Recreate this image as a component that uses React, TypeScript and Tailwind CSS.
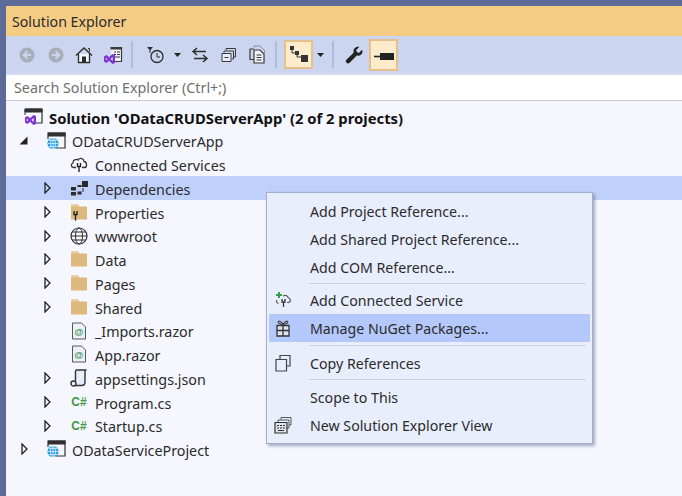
import type { ReactNode } from 'react';

const font = "font-['Noto_Sans',sans-serif]";

function Svg({ w = 18, h = 18, vb = '0 0 18 18', children }: { w?: number; h?: number; vb?: string; children: ReactNode }) {
  return (
    <svg width={w} height={h} viewBox={vb} fill="none" className="shrink-0">
      {children}
    </svg>
  );
}

function NavCircle({ dir }: { dir: 'l' | 'r' }) {
  return (
    <Svg w={16} h={16} vb="0 0 17 17">
      <circle cx="8.5" cy="8.5" r="8" fill="#a9adb8" />
      {dir === 'l' ? (
        <path d="M9 4.5 5 8.5l4 4M5.5 8.5H13" stroke="#ccd5f0" strokeWidth="2" />
      ) : (
        <path d="M8 4.5l4 4-4 4M11.5 8.5H4" stroke="#ccd5f0" strokeWidth="2" />
      )}
    </Svg>
  );
}

function HomeIcon() {
  return (
    <Svg>
      <path d="M1 9.5 9 2l8 7.5" stroke="#2d2d2d" strokeWidth="1.4" />
      <path d="M3.5 8v8.5h11V8" stroke="#2d2d2d" strokeWidth="1.3" fill="#f5f6fc" />
      <path d="M7 10.5h4v6H7z" fill="#2d2d2d" />
      <path d="M13 2.5h1.5v3" stroke="#2d2d2d" />
    </Svg>
  );
}

function VsGlyph({ x = 0, y = 0, s = 1, color = '#7b3fc4' }: { x?: number; y?: number; s?: number; color?: string }) {
  return (
    <g transform={`translate(${x} ${y}) scale(${s})`}>
      <path d="M0 2.5 2.5 1 5 3.2 8.5 0 11 1v8l-2.5 1L5 6.8 2.5 9 0 7.5zM1.8 3.6v2.8L3.4 5zM8.6 3 6.4 5l2.2 2z" fill={color} />
    </g>
  );
}

function SyncDocIcon() {
  return (
    <Svg w={20} h={20} vb="0 0 20 20">
      <path d="M7.5 2.5h11v14h-9" stroke="#3a3a3a" strokeWidth="1.2" fill="#f1f3fb" />
      <path d="M7.5 2.5h11v2h-11z" fill="#3a3a3a" />
      <path d="M11 7h2M14 7h3M11 9.5h2M14 9.5h3M11 12h6" stroke="#3a3a3a" />
      <VsGlyph x={1} y={9} color="#7d33d6" />
    </Svg>
  );
}

function HistoryIcon() {
  return (
    <Svg w={20} h={20} vb="0 0 20 20">
      <path d="M1 2h6L4 5.5z" fill="#2d2d2d" />
      <path d="M4 5v3" stroke="#2d2d2d" />
      <circle cx="11" cy="11.5" r="6" stroke="#2d2d2d" strokeWidth="1.3" />
      <path d="M11 8v4h3" stroke="#2d2d2d" />
    </Svg>
  );
}

function Caret() {
  return (
    <svg width="7" height="4" viewBox="0 0 7 4" className="shrink-0">
      <path d="M0 0h7L3.5 4z" fill="#222" />
    </svg>
  );
}

function SyncIcon() {
  return (
    <Svg>
      <path d="M6 2 2 5.5 6 9M2.5 5.5H15M12 9l4 3.5L12 16M15.5 12.5H3" stroke="#2d2d2d" strokeWidth="1.5" />
    </Svg>
  );
}

function CollapseIcon() {
  return (
    <Svg w={16} h={16} vb="0 0 16 16">
      <path d="M5 3V1.5h9.5V10H13" stroke="#3a3a3a" />
      <path d="M3 5.5V4h9.5v8H11" stroke="#3a3a3a" />
      <path d="M1 6.5h9v8H1z" stroke="#3a3a3a" fill="#e8ecf8" />
      <path d="M3.5 10.5h4" stroke="#3a3a3a" />
    </Svg>
  );
}

function PagesIcon() {
  return (
    <Svg w={19} h={19} vb="0 0 19 19">
      <path d="M6 4H2v10.5h4" stroke="#3a3a3a" strokeWidth="1.2" />
      <path d="M6 2.5V1h6l4.5 4.5V8" stroke="#8a8d96" strokeWidth="1" />
      <path d="M6 5h6l4 4v9H6z" stroke="#3a3a3a" strokeWidth="1.2" fill="#f1f3fb" />
      <path d="M8.5 10h5M8.5 12.5h5M8.5 15h5" stroke="#3a3a3a" />
    </Svg>
  );
}

function HierarchyIcon() {
  return (
    <Svg w={20} h={20} vb="0 0 20 20">
      <path d="M3 3v5h5v4h5" stroke="#333" />
      <rect x="1" y="1" width="4" height="4" fill="#333" />
      <rect x="6" y="6" width="4" height="4" fill="#333" />
      <rect x="12" y="10" width="7" height="7" fill="#333" />
    </Svg>
  );
}

function WrenchIcon() {
  return (
    <Svg>
      <path d="M17 3.8 13.6 7.2 10.8 4.4 14.2 1C11 .2 7.8 2.8 8.6 6.8L1.4 13.8c-1 1-.7 2.2.2 3s2 .9 3-.1l7.2-7.2c3.8.9 6.9-2.3 5.2-5.700z" fill="#222" />
    </Svg>
  );
}

function PinIcon() {
  return (
    <Svg w={20} h={12} vb="0 0 20 12">
      <path d="M0 7.5h7" stroke="#222" strokeWidth="1.6" />
      <path d="M6 4h14v7H6z" fill="#222" />
    </Svg>
  );
}

function ProjectIcon() {
  return (
    <Svg w={19} h={18} vb="0 0 19 18">
      <path d="M1 1h17v15H9" stroke="#303030" strokeWidth="1.2" fill="#f4f6fe" />
      <path d="M1 1h17v3H1zM1 1v6" stroke="#303030" strokeWidth="1.2" fill="#303030" />
      <circle cx="6" cy="11.5" r="5.5" fill="#2a9fe0" />
      <path d="M1 11.5h10M6 6v11M2 8.5h8M2 14.5h8" stroke="#d5effb" strokeWidth=".8" />
      <ellipse cx="6" cy="11.5" rx="2.5" ry="5.5" stroke="#d5effb" strokeWidth=".8" />
    </Svg>
  );
}

function SolutionIcon() {
  return (
    <Svg w={19} h={18} vb="0 0 19 18">
      <path d="M1 1h17v14H10" stroke="#303030" strokeWidth="1.2" />
      <path d="M1 1h17v3H1zM1 1v6" stroke="#303030" fill="#303030" />
      <VsGlyph x={1} y={7} color="#7d33d6" />
    </Svg>
  );
}

function CloudIcon() {
  return (
    <Svg>
      <path d="M6 12.5H3.5C1 12.5.5 9 3 8c-.3-3 3-4.5 5-3 2-2.800 6-1.500 6 1.500 3 .2 3.5 5.700.5 6H12" stroke="#333" strokeWidth="1.3" />
      <path d="M7.5 8v3.5h3V8M9 11.5V17" stroke="#222" strokeWidth="1.4" />
    </Svg>
  );
}

function DepsIcon() {
  return (
    <Svg>
      <rect x="1" y="8" width="5" height="3.5" fill="#2a2a2a" />
      <rect x="1" y="13" width="5" height="3.5" fill="#2a2a2a" />
      <rect x="7.5" y="6" width="4" height="2" fill="#2a2a2a" />
      <rect x="7.5" y="12.5" width="4" height="3" fill="#2a2a2a" />
      <rect x="12" y="2" width="6" height="6" fill="#2a2a2a" />
      <path d="M13 9v4" stroke="#2a2a2a" />
    </Svg>
  );
}

function FolderIcon({ children }: { children?: ReactNode }) {
  return (
    <Svg>
      <path d="M1 1.5h7l1.2 2H17v13H1z" fill="#deb97d" />
      <path d="M1 1.5h7l1 2H1z" fill="#e9cc9b" />
      {children}
    </Svg>
  );
}

function WrenchFolder() {
  return (
    <FolderIcon>
      <path d="M4 8v3.5h3V8M5.5 11v6.500" stroke="#222" strokeWidth="1.4" />
    </FolderIcon>
  );
}

function GlobeIcon() {
  return (
    <Svg>
      <circle cx="9" cy="9" r="8" stroke="#333" strokeWidth="1.2" />
      <ellipse cx="9" cy="9" rx="3.5" ry="8" stroke="#333" />
      <path d="M1 9h16M2.2 5h13.6M2.2 13h13.6" stroke="#333" />
    </Svg>
  );
}

function RazorIcon() {
  return (
    <Svg>
      <path d="M2.5 1h9l4 4v12h-13z" fill="#eef0f6" stroke="#55585f" />
      <text x="4.3" y="13" fontSize="9.5" fontWeight="700" fill="#3f9a6b" fontFamily="'Liberation Sans',sans-serif">@</text>
    </Svg>
  );
}

function JsonIcon() {
  return (
    <Svg>
      <path d="M5.5 12V2.500c0-1 .7-1.500 1.500-1.500h9.500M16.500 1c-1 0-1.500.6-1.500 1.500V13c0 2.500-2 3.500-3.500 3.500H5" stroke="#333" strokeWidth="1.4" fill="#e6ebfb" />
      <circle cx="3.5" cy="14.5" r="2.5" stroke="#333" strokeWidth="1.4" fill="#f5f6fe" />
    </Svg>
  );
}

function CsIcon() {
  return <span className="w-[18px] text-center font-['Liberation_Sans',sans-serif] text-[12px] font-bold leading-none text-[#3e9a45]">C#</span>;
}

function Arrow({ kind }: { kind?: 'open' | 'closed' }) {
  if (kind === 'open')
    return (
      <svg width="9" height="9" viewBox="0 0 9 9" className="shrink-0">
        <path d="M8.5.5v8h-8z" fill="#222" />
      </svg>
    );
  if (kind === 'closed')
    return (
      <svg width="7" height="12" viewBox="0 0 7 12" className="shrink-0">
        <path d="M1 1l5 5-5 5z" fill="none" stroke="#222" strokeWidth="1.3" />
      </svg>
    );
  return null;
}

type Row = { label: string; icon: ReactNode; indent: string; arrow?: 'open' | 'closed'; selected?: boolean; bold?: boolean };

const solutionIndent = 'ml-[-8px]';
const projectIndent = 'ml-[15px]';
const itemIndent = 'ml-[38px]';

const rows: Row[] = [
  { label: "Solution 'ODataCRUDServerApp' (2 of 2 projects)", icon: <SolutionIcon />, indent: solutionIndent, bold: true },
  { label: 'ODataCRUDServerApp', icon: <ProjectIcon />, indent: projectIndent, arrow: 'open' },
  { label: 'Connected Services', icon: <CloudIcon />, indent: itemIndent },
  { label: 'Dependencies', icon: <DepsIcon />, indent: itemIndent, arrow: 'closed', selected: true },
  { label: 'Properties', icon: <WrenchFolder />, indent: itemIndent, arrow: 'closed' },
  { label: 'wwwroot', icon: <GlobeIcon />, indent: itemIndent, arrow: 'closed' },
  { label: 'Data', icon: <FolderIcon />, indent: itemIndent, arrow: 'closed' },
  { label: 'Pages', icon: <FolderIcon />, indent: itemIndent, arrow: 'closed' },
  { label: 'Shared', icon: <FolderIcon />, indent: itemIndent, arrow: 'closed' },
  { label: '_Imports.razor', icon: <RazorIcon />, indent: itemIndent },
  { label: 'App.razor', icon: <RazorIcon />, indent: itemIndent },
  { label: 'appsettings.json', icon: <JsonIcon />, indent: itemIndent, arrow: 'closed' },
  { label: 'Program.cs', icon: <CsIcon />, indent: itemIndent, arrow: 'closed' },
  { label: 'Startup.cs', icon: <CsIcon />, indent: itemIndent, arrow: 'closed' },
  { label: 'ODataServiceProject', icon: <ProjectIcon />, indent: projectIndent, arrow: 'closed' },
];

function TreeRow({ row }: { row: Row }) {
  return (
    <div className={`flex h-[23.75px] items-center ${row.selected ? 'bg-[#bfd0fb]' : ''}`}>
      <div className={`flex w-[7px] shrink-0 justify-end ${row.indent}`}>
        <Arrow kind={row.arrow} />
      </div>
      <div className="ml-[18px] flex w-[20px] shrink-0 justify-center">{row.icon}</div>
      <span
        className={`ml-[6px] whitespace-nowrap pt-[4px] leading-none ${
          row.bold ? 'text-[14.8px] font-bold text-[#111]' : 'text-[14.3px] text-[#2b2b2b]'
        }`}
      >
        {row.label}
      </span>
    </div>
  );
}

function AddServiceIcon() {
  return (
    <Svg>
      <path d="M5 1v6M2 4h6" stroke="#2f9e44" strokeWidth="2" />
      <path d="M3 9c-1 1.5-.5 3 1.5 3.500M9 5c3-1.500 5 .5 5 1.500 2.500.5 3.500 4.500.5 5H13" stroke="#555" strokeWidth="1.2" />
      <path d="M8 8v3h3V8M9.500 11v5" stroke="#333" strokeWidth="1.3" />
    </Svg>
  );
}

function GiftIcon() {
  return (
    <Svg>
      <path d="M3 6.5h12V17H3z" fill="#dfe3ee" stroke="#333" strokeWidth="1.3" />
      <path d="M9 6.5V17M3 11.500h12" stroke="#333" strokeWidth="1.3" />
      <path d="M9 5.5C7.500 3 5.500 1.500 4.500 2.500S6 5.500 9 5.500c3 0 5.500-2 4.500-3S10.500 3 9 5.500z" stroke="#444" strokeWidth="1.2" />
    </Svg>
  );
}

function CopyIcon() {
  return (
    <Svg>
      <path d="M6 5V1.500h10V12h-3" stroke="#444" strokeWidth="1.2" />
      <path d="M2 5.500h10.500V17H2z" stroke="#444" strokeWidth="1.2" />
    </Svg>
  );
}

function NewViewIcon() {
  return (
    <Svg>
      <path d="M7 3.500V1.500h10V9h-2" stroke="#555" />
      <path d="M4 6V4h11v8h-2" stroke="#555" />
      <path d="M1 6.500h12V17H1z" fill="#dfe3ee" stroke="#333" strokeWidth="1.2" />
      <path d="M3 9.500h2M6 9.500h2M9 9.500h2M3 12h2M6 12h2M9 12h2M4 14.500h6" stroke="#333" />
    </Svg>
  );
}

function MenuItem({ label, icon, active }: { label: string; icon?: ReactNode; active?: boolean }) {
  return (
    <div className={`flex h-[28px] items-center ${active ? 'bg-[#b4c8fb]' : ''}`}>
      <div className="flex w-[28px] shrink-0 justify-center">{icon}</div>
      <span className="ml-[13px] whitespace-nowrap pt-[2px] text-[14.2px] leading-none text-[#2b2b2b]">{label}</span>
    </div>
  );
}

function MenuSep() {
  return <div className="ml-[40px] mr-[4px] h-px bg-[#cdd2dd]" />;
}

function ToolbarSep({ className }: { className: string }) {
  return <div className={`h-[27px] w-[2px] bg-[#b0bcd8] ${className}`} />;
}

export default function App() {
  return (
    <div className={`${font} flex h-[496px] w-[682px] flex-col overflow-hidden bg-[#5d6b99] pl-[6px] pt-[6px]`}>
      <div className="relative flex min-h-0 flex-1 flex-col">
        <div className="flex h-[30px] shrink-0 items-center bg-[#f5cc84] pl-[6px] pt-[2px] text-[14.2px] leading-none text-[#2a2a2a]">Solution Explorer</div>

        <div className="flex h-[37px] shrink-0 items-center bg-[#ccd5f0] pl-[13px]">
          <NavCircle dir="l" />
          <span className="ml-[13px]"><NavCircle dir="r" /></span>
          <span className="ml-[11px]"><HomeIcon /></span>
          <span className="ml-[10px]"><SyncDocIcon /></span>
          <ToolbarSep className="ml-[8px]" />
          <span className="ml-[13px]"><HistoryIcon /></span>
          <span className="ml-[8px]"><Caret /></span>
          <span className="ml-[10px]"><SyncIcon /></span>
          <span className="ml-[12px]"><CollapseIcon /></span>
          <span className="ml-[11px]"><PagesIcon /></span>
          <ToolbarSep className="ml-[8px]" />
          <div className="ml-[7px] flex h-[29px] w-[29px] items-center justify-center border-2 border-[#e5c08a] bg-[#fdeccb]">
            <HierarchyIcon />
          </div>
          <span className="ml-[4px]"><Caret /></span>
          <ToolbarSep className="ml-[8px]" />
          <span className="ml-[11px]"><WrenchIcon /></span>
          <div className="ml-[6px] flex h-[32px] w-[29px] items-center justify-center border-2 border-[#e5c08a] bg-[#fdeccb]">
            <PinIcon />
          </div>
        </div>

        <div className="h-[2px] shrink-0 bg-[#d5dcf2]" />
        <div className="flex h-[25px] shrink-0 items-center bg-white pl-[8px] pt-[1px] text-[14.3px] leading-none text-[#6f6f6f]">Search Solution Explorer (Ctrl+;)</div>
        <div className="h-[5px] shrink-0 bg-[#f5f6fe] shadow-[inset_0_1px_0_#c6cde0]" />

        <div className="min-h-0 flex-1 bg-[#f5f6fe]">
          {rows.map((row) => (
            <TreeRow key={row.label} row={row} />
          ))}
        </div>

        <div className="absolute left-[260px] top-[186px] w-[327px] border border-[#9fb0d0] bg-[#e9eefd] px-[2px] py-[4px] shadow-[2px_2px_3px_rgba(70,80,110,0.45)]">
          <MenuItem label="Add Project Reference..." />
          <MenuItem label="Add Shared Project Reference..." />
          <MenuItem label="Add COM Reference..." />
          <div className="h-[5px] pt-[2px]"><MenuSep /></div>
          <MenuItem label="Add Connected Service" icon={<AddServiceIcon />} />
          <MenuItem label="Manage NuGet Packages..." icon={<GiftIcon />} active />
          <div className="h-[7px] pt-[3px]"><MenuSep /></div>
          <MenuItem label="Copy References" icon={<CopyIcon />} />
          <div className="h-[6px] pt-[2px]"><MenuSep /></div>
          <MenuItem label="Scope to This" />
          <MenuItem label="New Solution Explorer View" icon={<NewViewIcon />} />
        </div>
      </div>
    </div>
  );
}
